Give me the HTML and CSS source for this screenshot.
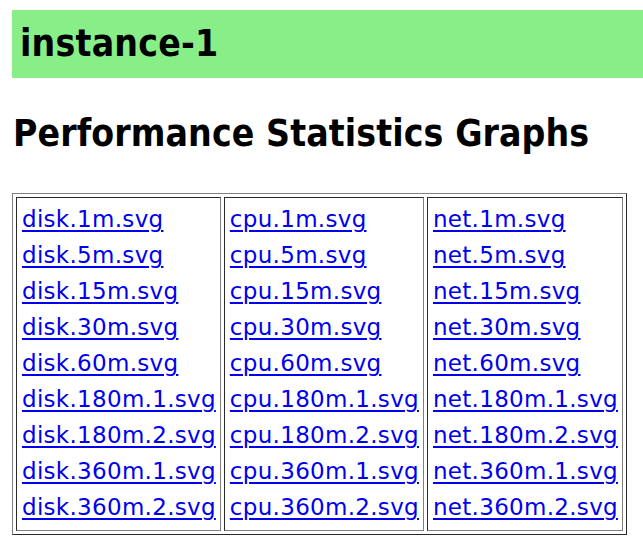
FILE: index.html
```html
<!DOCTYPE html>
<html>
<head>
<meta charset="utf-8">
<link rel="stylesheet" href="styles.css">
</head>
<body>
<h1 class="host">instance-1</h1>
<h2 class="title">Performance Statistics Graphs</h2>
<table class="graphs">
<tr>
<td class="col">
<a href="#">disk.1m.svg</a>
<a href="#">disk.5m.svg</a>
<a href="#">disk.15m.svg</a>
<a href="#">disk.30m.svg</a>
<a href="#">disk.60m.svg</a>
<a href="#">disk.180m.1.svg</a>
<a href="#">disk.180m.2.svg</a>
<a href="#">disk.360m.1.svg</a>
<a href="#">disk.360m.2.svg</a>
</td>
<td class="col">
<a href="#">cpu.1m.svg</a>
<a href="#">cpu.5m.svg</a>
<a href="#">cpu.15m.svg</a>
<a href="#">cpu.30m.svg</a>
<a href="#">cpu.60m.svg</a>
<a href="#">cpu.180m.1.svg</a>
<a href="#">cpu.180m.2.svg</a>
<a href="#">cpu.360m.1.svg</a>
<a href="#">cpu.360m.2.svg</a>
</td>
<td class="col">
<a href="#">net.1m.svg</a>
<a href="#">net.5m.svg</a>
<a href="#">net.15m.svg</a>
<a href="#">net.30m.svg</a>
<a href="#">net.60m.svg</a>
<a href="#">net.180m.1.svg</a>
<a href="#">net.180m.2.svg</a>
<a href="#">net.360m.1.svg</a>
<a href="#">net.360m.2.svg</a>
</td>
</tr>
</table>
</body>
</html>
```
FILE: styles.css
```css
html, body {
  margin: 0;
  padding: 0;
  background: #fff;
}
body {
  padding: 10px 0 0 12px;
  font-family: "DejaVu Sans", Verdana, sans-serif;
  color: #000;
}
.host {
  margin: 0;
  background: #88ee88;
  height: 68px;
  line-height: 68px;
  padding-left: 8px;
  font-family: "DejaVu Sans Condensed", "DejaVu Sans", sans-serif;
  font-stretch: condensed;
  font-size: 37px;
  font-weight: bold;
  letter-spacing: 0.2px;
}
.title {
  margin: 34px 0 0 1px;
  font-family: "DejaVu Sans Condensed", "DejaVu Sans", sans-serif;
  font-stretch: condensed;
  font-size: 37px;
  font-weight: bold;
  line-height: 44px;
  letter-spacing: 0.1px;
}
.graphs {
  margin-top: 37px;
  border-spacing: 3px;
  border: 1px solid;
  border-color: #808080 #2a2a2a #2a2a2a #808080;
}
.col {
  vertical-align: top;
  padding: 3px 4px 5px 5px;
  border: 1px solid;
  border-color: #2a2a2a #808080 #808080 #2a2a2a;
}
.col a {
  display: block;
  color: #0000ee;
  font-size: 23px;
  letter-spacing: 0.3px;
  line-height: 36px;
  text-decoration-thickness: 2px;
  text-underline-offset: 3px;
}
```
